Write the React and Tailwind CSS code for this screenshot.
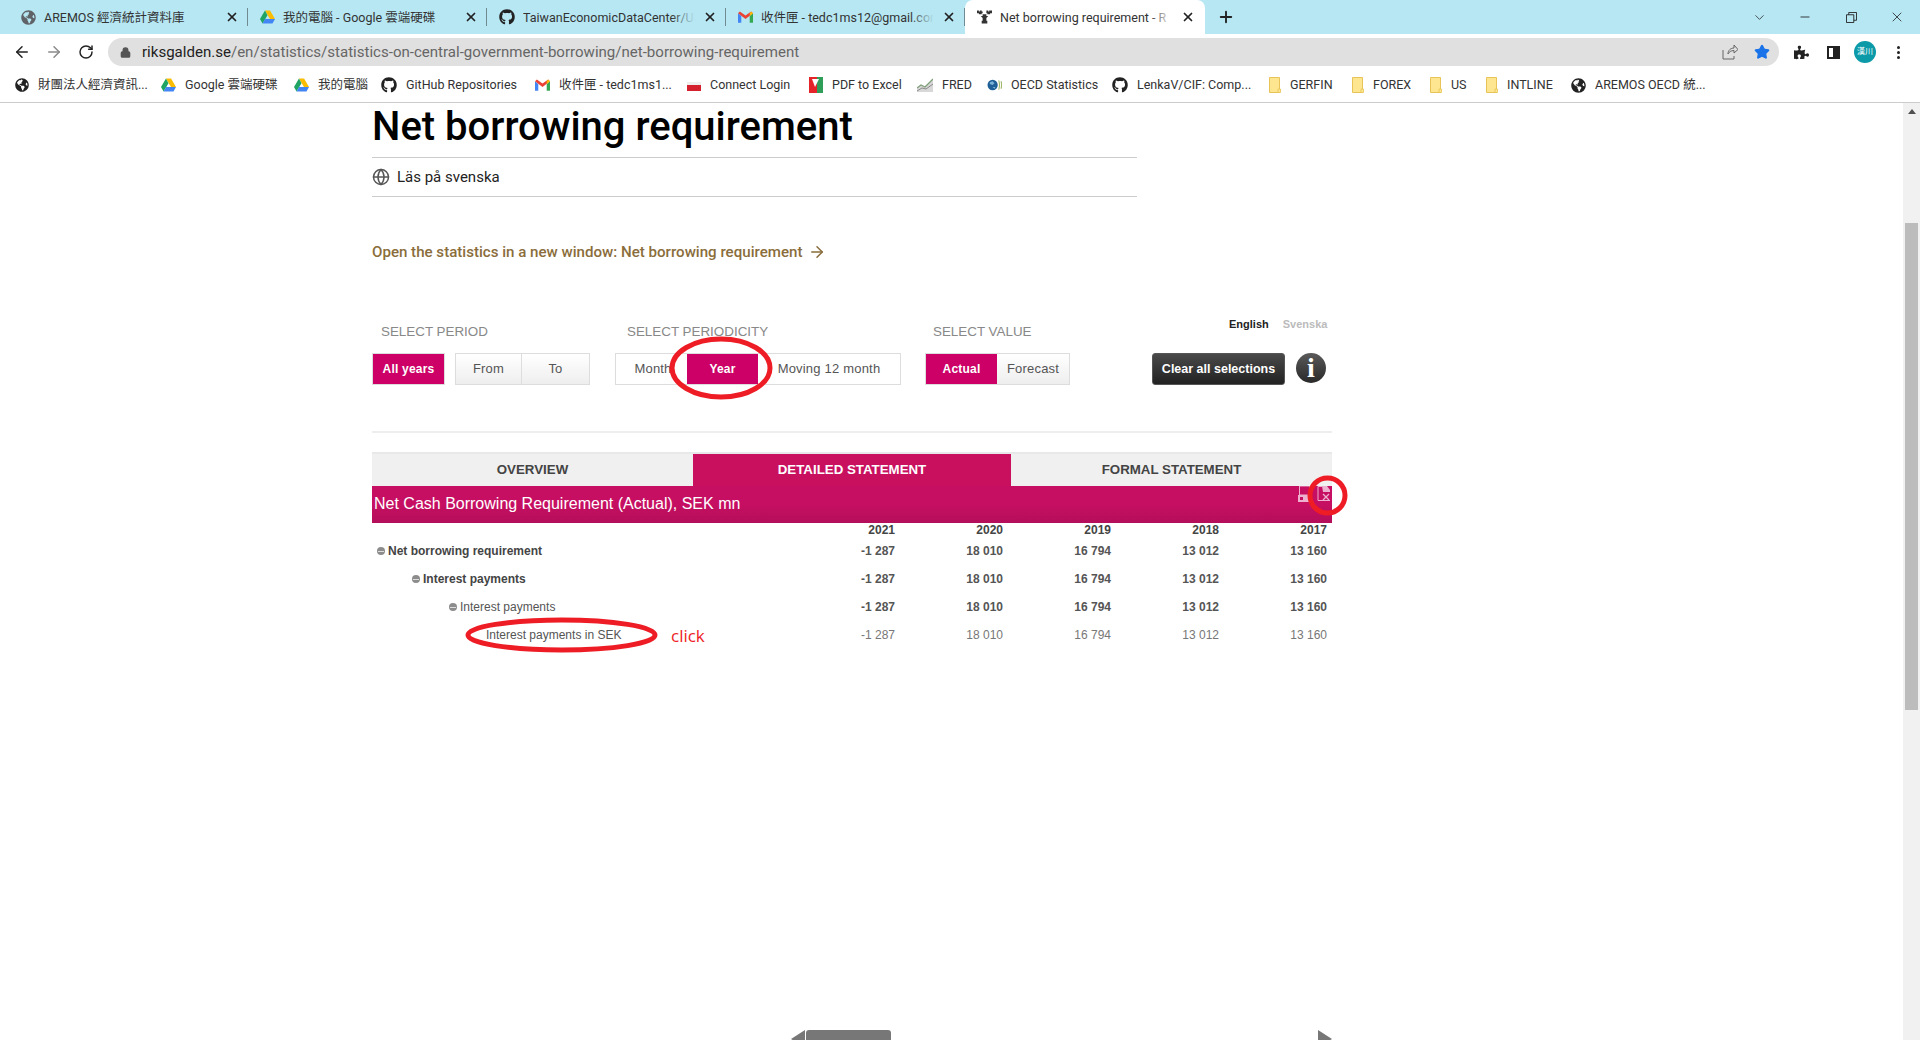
import { ArrowLeft, ArrowRight, RotateCw, Lock, Star, X, Plus, ChevronDown, Minus, Globe } from "lucide-react";
import { FaGithub, FaGlobeAmericas, FaPuzzlePiece } from "react-icons/fa";

const uiFont = "font-['Roboto','Noto_Sans_CJK_TC',sans-serif]";
const arial = "font-['Liberation_Sans','Noto_Sans_CJK_TC',sans-serif]";

function DriveIcon() {
  return (
    <svg viewBox="0 0 16 14" className="w-[15px] h-[14px] shrink-0">
      <path d="M5.3 0h5.4l5.3 9h-5.4z" fill="#fbbc04" />
      <path d="M5.3 0L0 9l2.7 5 5.3-9z" fill="#1fa463" />
      <path d="M2.7 14h10.6l2.7-5H5.4z" fill="#4285f4" />
    </svg>
  );
}

function GmailIcon() {
  return (
    <svg viewBox="0 0 16 12" className="w-[15px] h-[12px] shrink-0">
      <path d="M0 2v10h3.5V5z" fill="#4285f4" />
      <path d="M16 2v10h-3.5V5z" fill="#34a853" />
      <path d="M0 2l8 6 8-6-2-2-6 4.5L2 0z" fill="#ea4335" />
      <path d="M14 0l2 2-3.5 3V2z" fill="#fbbc04" />
    </svg>
  );
}

function CastleIcon() {
  return (
    <svg viewBox="0 0 16 14" className="w-[15px] h-[14px] shrink-0" fill="#333">
      <path d="M0 0h2v1h1V0h2v1h1v2H5v1H2V3H0z" />
      <path d="M10 0h2v1h1V0h3v3h-2v1h-3V3h-1z" />
      <path d="M6 4h4v2h2l-2 2v3h1v3H5v-3h1V8L4 6h2z" />
    </svg>
  );
}

function FlagIcon() {
  return (
    <div className="w-[14px] h-[9px] flex flex-col shrink-0 mt-[3px]">
      <div className="h-[3px] bg-[#eee]" />
      <div className="h-[6px] bg-[#d3202c]" />
    </div>
  );
}

function PdfIcon() {
  return (
    <svg viewBox="0 0 14 16" className="w-[14px] h-[16px] shrink-0">
      <path d="M0 0h14v16H0z" fill="#e5242a" />
      <path d="M8 0h6v16H8z" fill="#2f9e58" />
      <path d="M3 2h7L6 10z" fill="#fff" />
    </svg>
  );
}

function FredIcon() {
  return (
    <svg viewBox="0 0 16 14" className="w-[16px] h-[14px] shrink-0">
      <path d="M0 14V10l4-3 4 2 8-8v13z" fill="#d8d8d8" />
      <path d="M0 10l4-3 4 2 8-8" stroke="#7f9f7a" strokeWidth="1.3" fill="none" />
      <path d="M0 13l5-3 4 1 7-5" stroke="#8a8a8a" strokeWidth="1" fill="none" />
    </svg>
  );
}

function OecdIcon() {
  return (
    <svg viewBox="0 0 16 14" className="w-[15px] h-[14px] shrink-0">
      <circle cx="6" cy="7" r="5.5" fill="#1d5f96" />
      <path d="M3 4l3-1 2 2-2 2-3-1zM6 9l3 0-1 2z" fill="#7ab2d6" />
      <path d="M12.5 2c1 3 1 7 0 10M15 3c.7 2.500.7 5.500 0 8" stroke="#9fb86c" strokeWidth="1.2" fill="none" />
    </svg>
  );
}

function FolderIcon() {
  return (
    <svg viewBox="0 0 12 16" className="w-[12px] h-[16px] shrink-0">
      <path d="M.5.5h10v15H.5z" fill="#fde68f" stroke="#e8c458" />
      <path d="M9 12h2.500v3.500H9z" fill="#fde68f" stroke="#e8c458" strokeWidth=".8" />
    </svg>
  );
}

const tabs = [
  { icon: <FaGlobeAmericas className="text-[#5f6368] w-[15px] h-[15px] shrink-0" />, title: "AREMOS 經濟統計資料庫" },
  { icon: <DriveIcon />, title: "我的電腦 - Google 雲端硬碟" },
  { icon: <FaGithub className="text-[#222] w-[16px] h-[16px] shrink-0" />, title: "TaiwanEconomicDataCenter/US" },
  { icon: <GmailIcon />, title: "收件匣 - tedc1ms12@gmail.com" },
  { icon: <CastleIcon />, title: "Net borrowing requirement - R", active: true },
];

const bookmarks = [
  { icon: <FaGlobeAmericas className="text-[#222] w-[14px] h-[14px] shrink-0" />, label: "財團法人經濟資訊...", w: "w-[146px]" },
  { icon: <DriveIcon />, label: "Google 雲端硬碟", w: "w-[133px]" },
  { icon: <DriveIcon />, label: "我的電腦", w: "w-[87px]" },
  { icon: <FaGithub className="text-[#222] w-[16px] h-[16px] shrink-0" />, label: "GitHub Repositories", w: "w-[154px]" },
  { icon: <GmailIcon />, label: "收件匣 - tedc1ms1...", w: "w-[152px]" },
  { icon: <FlagIcon />, label: "Connect Login", w: "w-[122px]" },
  { icon: <PdfIcon />, label: "PDF to Excel", w: "w-[108px]" },
  { icon: <FredIcon />, label: "FRED", w: "w-[70px]" },
  { icon: <OecdIcon />, label: "OECD Statistics", w: "w-[125px]" },
  { icon: <FaGithub className="text-[#222] w-[16px] h-[16px] shrink-0" />, label: "LenkaV/CIF: Comp...", w: "w-[157px]" },
  { icon: <FolderIcon />, label: "GERFIN", w: "w-[83px]" },
  { icon: <FolderIcon />, label: "FOREX", w: "w-[78px]" },
  { icon: <FolderIcon />, label: "US", w: "w-[56px]" },
  { icon: <FolderIcon />, label: "INTLINE", w: "w-[85px]" },
  { icon: <FaGlobeAmericas className="text-[#222] w-[15px] h-[15px] shrink-0" />, label: "AREMOS OECD 統...", w: "w-[140px]" },
];

const years = ["2021", "2020", "2019", "2018", "2017"];

const rows = [
  { label: "Net borrowing requirement", indent: "pl-[5px]", strong: true, toggle: true },
  { label: "Interest payments", indent: "pl-[40px]", strong: true, toggle: true },
  { label: "Interest payments", indent: "pl-[77px]", toggle: true },
  { label: "Interest payments in SEK", indent: "pl-[114px]" },
];

const values = ["-1 287", "18 010", "16 794", "13 012", "13 160"];

function BrowserTab({ tab }) {
  if (tab.active) {
    return (
      <div className="relative w-[240px] h-[34px] bg-white rounded-t-[8px] flex items-center pl-[12px] pr-[10px] gap-[8px]">
        {tab.icon}
        <div className="relative flex-1 overflow-hidden whitespace-nowrap text-[12.5px] leading-[18px] pt-[1px] text-[#333]">
          {tab.title}
          <div className="absolute right-0 top-0 bottom-0 w-[24px] bg-linear-to-r from-transparent to-white" />
        </div>
        <X className="w-[14px] h-[14px] text-[#222]" strokeWidth={3} />
      </div>
    );
  }
  return (
    <div className="relative w-[239px] h-[34px] flex items-center pl-[12px] pr-[8px] gap-[8px] border-r border-[#6f8a91] [border-image:linear-gradient(transparent_25%,#6f8a91_25%,#6f8a91_75%,transparent_75%)_1]">
      {tab.icon}
      <div className="relative flex-1 overflow-hidden whitespace-nowrap text-[12.5px] leading-[18px] pt-[1px] text-[#333]">
        {tab.title}
        <div className="absolute right-0 top-0 bottom-0 w-[24px] bg-linear-to-r from-transparent to-[#b6e7f3]" />
      </div>
      <X className="w-[14px] h-[14px] text-[#222]" strokeWidth={3} />
    </div>
  );
}

function SegButton({ children, active, className }) {
  return (
    <div
      className={
        "h-full flex items-center justify-center " +
        (active
          ? "bg-[#cc0066] text-white font-bold text-[12px] tracking-[0.2px] "
          : "text-[#555] text-[13px] tracking-[0.2px] ") +
        className
      }
    >
      {children}
    </div>
  );
}

export default function App() {
  return (
    <div className={"relative w-[1920px] h-[1040px] overflow-hidden bg-white flex flex-col " + uiFont}>
      {/* Tab strip */}
      <div className="h-[34px] bg-[#b6e7f3] flex items-center pl-[9px] shrink-0">
        {tabs.map((tab, i) => (
          <BrowserTab key={i} tab={tab} />
        ))}
        <Plus className="w-[18px] h-[18px] text-[#222] ml-[12px]" strokeWidth={2.5} />
        <div className="ml-auto flex items-center text-[#222]">
          <div className="w-[46px] flex justify-center">
            <ChevronDown className="w-[15px] h-[15px]" strokeWidth={1.2} />
          </div>
          <div className="w-[46px] flex justify-center">
            <Minus className="w-[14px] h-[14px]" strokeWidth={1.5} />
          </div>
          <div className="w-[46px] flex justify-center">
            <svg viewBox="0 0 12 12" className="w-[11px] h-[11px]" fill="none" stroke="#222">
              <path d="M.5 3h8v8.500h-8zM3 3V.5h8.500V9H8.500" />
            </svg>
          </div>
          <div className="w-[46px] flex justify-center">
            <X className="w-[16px] h-[16px]" strokeWidth={1.2} />
          </div>
        </div>
      </div>

      {/* Address bar */}
      <div className="h-[32px] flex items-start shrink-0 bg-white">
        <div className="w-[108px] h-[32px] flex items-center pt-[4px] pl-[13px]">
          <ArrowLeft className="w-[18px] h-[18px] text-[#222]" strokeWidth={2} />
          <ArrowRight className="w-[18px] h-[18px] text-[#8a8a8a] ml-[14px]" strokeWidth={2} />
          <RotateCw className="w-[16px] h-[16px] text-[#222] ml-[15px]" strokeWidth={2.2} />
        </div>
        <div className="mt-[4px] w-[1671px] h-[28px] rounded-full bg-[#e0e0e0] flex items-center pl-[12px] pr-[9px]">
          <Lock className="w-[11px] h-[11px] text-[#555]" fill="#555" strokeWidth={3} />
          <div className="ml-[11px] text-[15.05px] text-[#666] whitespace-nowrap">
            <span className="text-[#222]">riksgalden.se</span>/en/statistics/statistics-on-central-government-borrowing/net-borrowing-requirement
          </div>
          <svg viewBox="0 0 16 16" className="ml-auto w-[16px] h-[16px] mr-[16px]" fill="none" stroke="#666" strokeWidth="1">
            <path d="M1 6v9h11v-3M6 10c0-4 3-6 6-6V1l4 4.500L12 9V6.500C9 6.500 7 8 6 10z" />
          </svg>
          <Star className="w-[16px] h-[16px] text-[#1a73e8]" fill="#1a73e8" />
        </div>
        <div className="h-[32px] pt-[4px] flex items-center">
          <FaPuzzlePiece className="w-[15px] h-[15px] text-[#222] ml-[15px]" />
          <div className="ml-[18px] w-[13px] h-[13px] border-[2px] border-[#222] flex justify-end">
            <div className="w-[5px] bg-[#222]" />
          </div>
          <div className="ml-[14px] w-[22px] h-[22px] rounded-full bg-[#0d9aa8] text-white text-[8px] flex items-center justify-center">
            漢川
          </div>
          <div className="ml-[21px] flex flex-col gap-[2px]">
            <div className="w-[3px] h-[3px] rounded-full bg-[#222]" />
            <div className="w-[3px] h-[3px] rounded-full bg-[#222]" />
            <div className="w-[3px] h-[3px] rounded-full bg-[#222]" />
          </div>
        </div>
      </div>

      {/* Bookmarks */}
      <div className="h-[37px] border-b border-[#ccc] flex items-center pl-[15px] pt-[2px] shrink-0 bg-white">
        {bookmarks.map((b, i) => (
          <div key={i} className={"flex items-center gap-[9px] shrink-0 text-[12.5px] text-[#333] whitespace-nowrap " + b.w}>
            {b.icon}
            <span>{b.label}</span>
          </div>
        ))}
      </div>

      {/* Page */}
      <div className="flex-1 flex min-h-0">
        <div className="flex-1 pl-[372px] flex flex-col min-w-0">
          <div className="w-[960px] flex-1 flex flex-col">
            <div className="w-[765px]">
              <div className="h-[55px] border-b border-[#ccc] flex items-center pb-[7px]">
                <h1 className="text-[40px] leading-[40px] font-medium text-black">Net borrowing requirement</h1>
              </div>
              <div className="h-[39px] border-b border-[#ccc] flex items-center gap-[7px] text-[15px] text-[#222]">
                <Globe className="w-[18px] h-[18px] text-[#555]" strokeWidth={2} />
                <span>Läs på svenska</span>
              </div>
            </div>

            <div className="mt-[44px] h-[22px] flex items-center gap-[6px] text-[15.1px] font-medium text-[#8a6d3b]">
              <span>Open the statistics in a new window: Net borrowing requirement</span>
              <ArrowRight className="w-[18px] h-[18px]" strokeWidth={2} />
            </div>

            {/* Selections */}
            <div className={"mt-[54px] flex h-[68px] " + arial}>
              <div className="w-[243px]">
                <div className="h-[28px] mb-[8px] leading-[29px] pl-[9px] text-[13.4px] text-[#888]">SELECT PERIOD</div>
                <div className="flex h-[32px]">
                  <div className="w-[73px] h-full border border-[#ddd]">
                    <SegButton active className="w-full">All years</SegButton>
                  </div>
                  <div className="ml-[10px] w-[135px] h-full flex border border-[#ddd] bg-linear-to-b from-white to-[#eee]">
                    <SegButton className="w-[66px] border-r border-[#ddd]">From</SegButton>
                    <SegButton className="flex-1">To</SegButton>
                  </div>
                </div>
              </div>
              <div className="w-[310px]">
                <div className="h-[28px] mb-[8px] leading-[29px] pl-[12px] text-[13.4px] text-[#888]">SELECT PERIODICITY</div>
                <div className="w-[286px] h-[32px] flex border border-[#ddd]">
                  <SegButton className="w-[71px] pl-[3px]">Month</SegButton>
                  <SegButton active className="w-[71px]">Year</SegButton>
                  <SegButton className="flex-1">Moving 12 month</SegButton>
                </div>
              </div>
              <div className="w-[227px]">
                <div className="h-[28px] mb-[8px] leading-[29px] pl-[8px] text-[13.4px] text-[#888]">SELECT VALUE</div>
                <div className="w-[145px] h-[32px] flex border border-[#ddd] bg-linear-to-b from-white to-[#eee]">
                  <SegButton active className="w-[71px]">Actual</SegButton>
                  <SegButton className="flex-1">Forecast</SegButton>
                </div>
              </div>
              <div className="w-[180px]">
                <div className="h-[14px] mb-[22px] flex text-[11px] leading-[14px] font-bold">
                  <span className="ml-[77px] text-[#222]">English</span>
                  <span className="ml-[14px] text-[#bbb]">Svenska</span>
                </div>
                <div className="flex items-start h-[32px]">
                  <div className="w-[133px] h-[32px] rounded-[3px] border border-[#555] bg-linear-to-b from-[#4a4a4a] to-[#222] text-white text-[12.5px] font-bold flex items-center justify-center">
                    Clear all selections
                  </div>
                  <div className="ml-[11px] w-[30px] h-[30px] rounded-full bg-linear-to-b from-[#5a5a5a] to-[#2a2a2a] text-white text-[28px] leading-[30px] font-bold text-center font-['Liberation_Serif',serif]">
                    i
                  </div>
                </div>
              </div>
            </div>

            <div className="mt-[46px] h-[2px] bg-[#eee]" />

            {/* Statement tabs */}
            <div className={"mt-[19px] h-[34px] grid grid-cols-[321px_318px_321px] border-t-2 border-[#e8e8e8] text-[13.3px] font-bold text-center leading-[32px] " + arial}>
              <div className="bg-[#f0f0f0] text-[#444]">OVERVIEW</div>
              <div className="bg-[#c8105f] text-white">DETAILED STATEMENT</div>
              <div className="bg-[#f0f0f0] text-[#444]">FORMAL STATEMENT</div>
            </div>

            <div className={"h-[37px] bg-linear-to-b from-[#c60f62] via-[#c60f62] to-[#b40e5a] flex justify-between pl-[2px] " + arial}>
              <div className="text-[16px] leading-[36px] text-white">Net Cash Borrowing Requirement (Actual), SEK mn</div>
              <div className="flex items-start gap-[5px] mr-[1px]">
                <svg viewBox="0 0 14 16" className="w-[14px] h-[16px]">
                  <path d="M0 9h14v7H0z" fill="#eeb0cf" />
                  <path d="M1.500 0h10v9h-10z" fill="none" stroke="#eeb0cf" strokeWidth="1" />
                  <path d="M2 11h3v3H2z" fill="#c60f62" />
                </svg>
                <svg viewBox="0 0 14 15" className="w-[14px] h-[15px]" fill="none" stroke="#eeb0cf" strokeWidth="1">
                  <path d="M5 .5H1v14h12" />
                  <path d="M5 0h5l3 4v2H6z" fill="#eeb0cf" stroke="none" />
                  <path d="M6 8l6 6M12 8l-6 6" strokeWidth="1.300" />
                </svg>
              </div>
            </div>

            {/* Table */}
            <div className={"text-[12px] " + arial}>
              <div className="grid grid-cols-[420px_repeat(5,108px)] h-[14px] leading-[14px] font-bold text-[#444]">
                <div />
                {years.map((y) => (
                  <div key={y} className="text-right pr-[5px]">{y}</div>
                ))}
              </div>
              {rows.map((row, i) => (
                <div key={i} className="grid grid-cols-[420px_repeat(5,108px)] h-[28px] items-center">
                  <div className={"flex items-center gap-[3px] " + row.indent + (row.strong ? " font-bold text-[#444]" : " text-[#555]")}>
                    {row.toggle && (
                      <span className="w-[8px] h-[8px] rounded-full bg-[#8c8c8c] flex items-center justify-center">
                        <span className="w-[6px] h-[1px] bg-[#ddd]" />
                      </span>
                    )}
                    <span>{row.label}</span>
                  </div>
                  {values.map((v, j) => (
                    <div
                      key={j}
                      className={
                        "text-right pr-[5px] " +
                        (row.toggle ? "font-bold text-[#555]" : "text-[#777]")
                      }
                    >
                      {v}
                    </div>
                  ))}
                </div>
              ))}
            </div>

            {/* Horizontal scroller of the table */}
            <div className="mt-auto ml-[419px] w-[541px] h-[10px] flex overflow-hidden">
              <svg viewBox="0 0 14 18" className="w-[14px] h-[18px] shrink-0">
                <path d="M0 9L14 0v18z" fill="#777" />
              </svg>
              <div className="ml-[1px] w-[85px] h-[18px] rounded-[3px] bg-[#777]" />
              <svg viewBox="0 0 14 18" className="ml-auto w-[14px] h-[18px] shrink-0">
                <path d="M14 9L0 0v18z" fill="#777" />
              </svg>
            </div>
          </div>
        </div>

        {/* Page scrollbar */}
        <div className="w-[17px] shrink-0 bg-[#f1f1f1] flex flex-col items-center">
          <svg viewBox="0 0 8 5" className="mt-[6px] w-[8px] h-[5px]">
            <path d="M4 0l4 5H0z" fill="#505050" />
          </svg>
          <div className="mt-[109px] w-[13px] h-[487px] bg-[#bcbcbc]" />
        </div>
      </div>

      {/* Red annotations on top of the screenshot */}
      <svg className="absolute left-0 top-0 w-[1920px] h-[1040px] pointer-events-none" viewBox="0 0 1920 1040" fill="none" stroke="#ee1c25" strokeWidth="5">
        <ellipse cx="721" cy="368" rx="49" ry="29" />
        <ellipse cx="561.500" cy="635" rx="93.500" ry="15" />
        <circle cx="1327.500" cy="495.500" r="17.500" />
      </svg>
      <div className="absolute left-[671px] top-[624px] text-[17px] leading-[24px] text-[#ee1c25] font-['Open_Sans',sans-serif]">click</div>
    </div>
  );
}
